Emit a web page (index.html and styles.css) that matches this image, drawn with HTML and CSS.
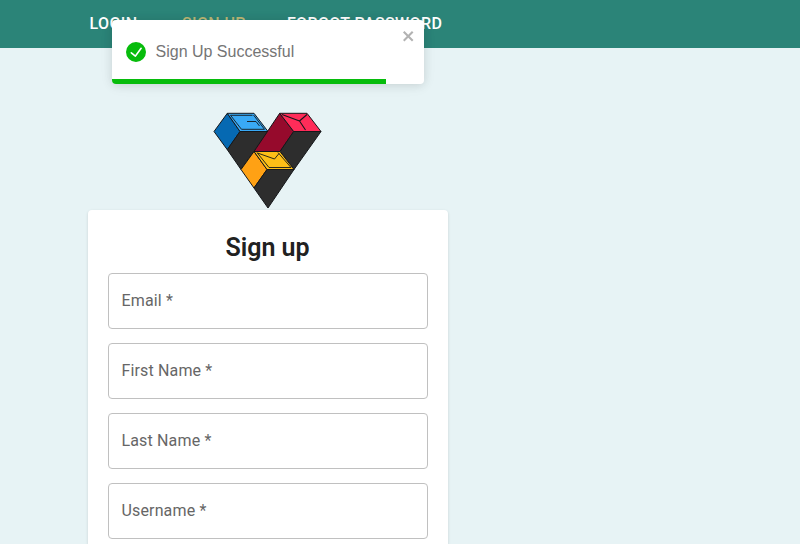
FILE: index.html
```html
<!DOCTYPE html>
<html lang="en">
<head>
<meta charset="utf-8">
<title>Sign up</title>
<link rel="stylesheet" href="styles.css">
</head>
<body>
<header class="bar">
  <nav class="nav">
    <a class="link">LOGIN</a>
    <a class="link active">SIGN UP</a>
    <a class="link">FORGOT PASSWORD</a>
  </nav>
</header>
<main class="page">
  <svg class="logo" width="110" height="98" viewBox="213 112 110 98" stroke="#15171a" stroke-width="1" stroke-linejoin="round">
    <path fill="#0669b2" d="M214 131.500 227.300 113.300 240 131.500 227.300 149.700z"/>
    <path fill="#39a9f5" d="M227.300 113.300H254L268 131.500H240z"/>
    <path fill="#2d2d2d" d="M240 131.500H268L254 151.500 241 169.500 227.300 149.700z"/>
    <path fill="#960a2c" d="M254 151.500 279.700 113.300 293.700 131.500 280 151.500z"/>
    <path fill="#ff2c59" d="M279.700 113.300H307L321 131.500H293.700z"/>
    <path fill="#2d2d2d" d="M293.700 131.500H321L294 169.500 280 151.500z"/>
    <path fill="#ffa114" d="M254 151.500 267 169.500 254 188 241 169.500z"/>
    <path fill="#fdbe17" d="M254 151.500H280L294 169.500H267z"/>
    <path fill="#2d2d2d" d="M267 169.500H294L268 208 254 188z"/>
    <path fill="none" stroke-width=".9" d="M252.500 115.300H230.500L241.500 129.300H264.500L253.500 115M247 121.500H256L259.500 126"/>
    <path fill="none" d="M282 114.500 299.500 121 307 114.500M299.500 121 305.500 130" stroke-width="1.100"/>
    <path fill="none" d="M257 152.500 269 167.500H291L278 152.500M257.500 153 274.500 159 279 153.500" stroke-width=".9"/>
  </svg>
  <section class="card">
    <h1 class="title">Sign up</h1>
    <form class="fields">
      <label class="field">Email *</label>
      <label class="field">First Name *</label>
      <label class="field">Last Name *</label>
      <label class="field">Username *</label>
    </form>
  </section>
</main>
<div class="toast">
  <svg class="check" width="20" height="20" viewBox="0 0 24 24"><path fill="#07bc0c" d="M12 0a12 12 0 1012 12A12.014 12.014 0 0012 0zm6.927 8.200l-6.845 9.289a1.011 1.011 0 01-1.430.188l-4.888-3.908a1 1 0 111.250-1.562l4.076 3.261 6.227-8.451a1 1 0 111.610 1.183z"/></svg>
  <span class="message">Sign Up Successful</span>
  <svg class="close" width="14" height="16" viewBox="0 0 14 16"><path fill="#b2b2b2" fill-rule="evenodd" d="M7.710 8.230l3.750 3.750-1.480 1.480-3.750-3.750-3.750 3.750L1 11.980l3.750-3.750L1 4.480 2.480 3l3.750 3.750L9.980 3l1.480 1.480-3.750 3.750z"/></svg>
  <div class="progress"></div>
</div>
</body>
</html>
```
FILE: styles.css
```css
* { box-sizing: border-box; }
body {
  margin: 0;
  background: #e7f3f5;
  font-family: Roboto, sans-serif;
}
.bar { height: 48px; background: #2b8478; }
.nav { display: flex; gap: 43px; padding: 14px 0 0 89.5px; }
.link {
  color: #fff;
  font-size: 16px;
  line-height: 19px;
  font-weight: 500;
  letter-spacing: .4px;
  white-space: nowrap;
}
.active { margin: 0 -2px 0 1.5px; color: #bcb775; }
.page {
  width: 360px;
  margin-left: 88px;
  padding-top: 64px;
  display: flex;
  flex-direction: column;
  align-items: center;
}
.logo { display: block; }
.card {
  width: 360px;
  height: 334px;
  padding: 20px 20px 0;
  border-radius: 4px 4px 0 0;
  background: #fff;
  box-shadow: 0 1px 3px rgba(0, 0, 0, .14);
}
.title {
  margin: 0 1px 8px 0;
  color: #212121;
  font-size: 25px;
  line-height: 35px;
  font-weight: 600;
  text-align: center;
}
.fields { display: flex; flex-direction: column; gap: 14px; }
.field {
  height: 56px;
  padding: 0 12.5px;
  border: 1px solid #c0c0c0;
  border-radius: 4px;
  color: #666;
  font-size: 16px;
  line-height: 53px;
  letter-spacing: .15px;
}
.toast {
  position: absolute;
  left: 112px;
  top: 20px;
  width: 312px;
  height: 64px;
  padding: 0 14px;
  display: flex;
  align-items: center;
  gap: 9.5px;
  overflow: hidden;
  border-radius: 4px;
  background: #fff;
  color: #757575;
  font: 16px/20px "Liberation Sans", sans-serif;
  box-shadow: 0 1px 10px rgba(0, 0, 0, .1), 0 2px 15px rgba(0, 0, 0, .05);
}
.close { position: absolute; right: 8px; top: 8px; }
.progress {
  position: absolute;
  left: 0;
  bottom: 0;
  width: 274px;
  height: 5px;
  background: #07bc0c;
}
```
